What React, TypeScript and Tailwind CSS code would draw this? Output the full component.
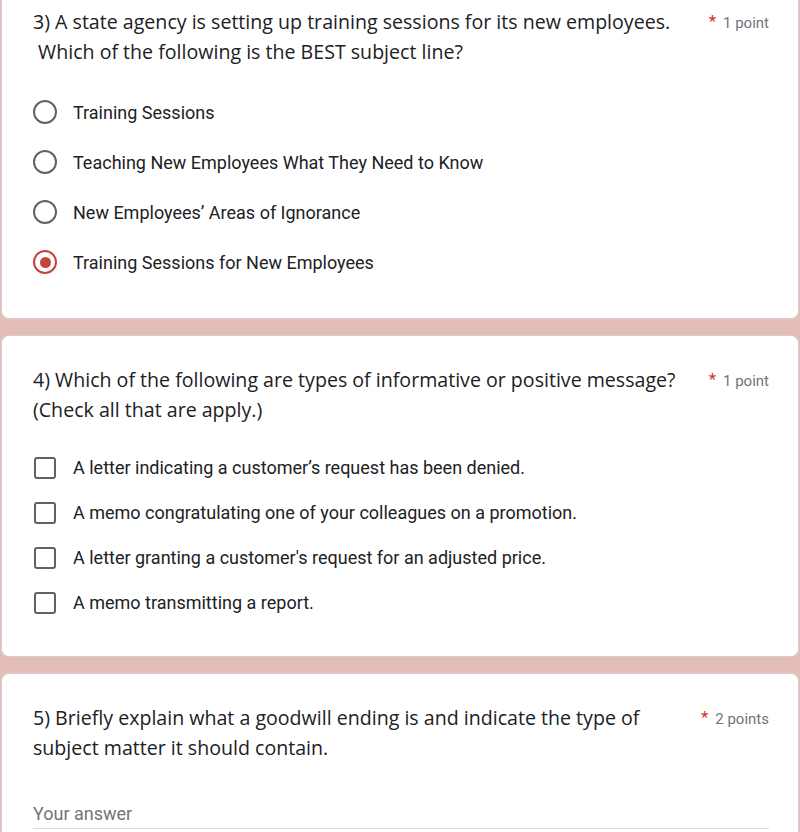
import React from "react";

const qFont = { fontFamily: '"Open Sans", Roboto, sans-serif' };

function Points({ label }: { label: string }) {
  return (
    <div className="flex shrink-0 items-start pt-[4px]" style={{ fontFamily: 'Roboto, "Liberation Sans", sans-serif' }}>
      <span className="mr-[7px] mt-[2px] text-[17px] leading-[17px] text-[#d93025]">*</span>
      <span className="text-[15px] leading-[24px] text-[#70757a]">{label}</span>
    </div>
  );
}

function Radio({ checked }: { checked?: boolean }) {
  return checked ? (
    <div className="flex h-[24px] w-[24px] items-center justify-center rounded-full border-2 border-[#c5433a]">
      <div className="h-[11px] w-[11px] rounded-full bg-[#c5433a]" />
    </div>
  ) : (
    <div className="h-[24px] w-[24px] rounded-full border-2 border-[#5f6368]" />
  );
}

function Checkbox() {
  return <div className="h-[22px] w-[22px] rounded-[3px] border-2 border-[#5f6368]" />;
}

export default function App() {
  const optText = "text-[18px] text-[#202124]";
  const optStyle = { fontFamily: 'Roboto, "Liberation Sans", sans-serif' };
  return (
    <div className="min-h-[832px] w-[800px] overflow-hidden bg-[#e5bdb8] px-[1px]">
      {/* Card 1 */}
      <div className="rounded-b-lg border border-t-0 border-[#d8cfcd] bg-white pb-[31px] pl-[31px] pr-[29px] pt-[7px]">
        <div className="flex justify-between gap-4">
          <div className="text-[19.6px] leading-[30px] text-[#202124]" style={qFont}>
            3) A state agency is setting up training sessions for its new employees.
            <br />
            {"\u00a0"}Which of the following is the BEST subject line?
          </div>
          <Points label="1 point" />
        </div>
        <div className="mt-[20px] flex flex-col">
          {[
            ["Training Sessions", false],
            ["Teaching New Employees What They Need to Know", false],
            ["New Employees’ Areas of Ignorance", false],
            ["Training Sessions for New Employees", true],
          ].map(([t, c]) => (
            <div key={t as string} className="flex h-[50px] items-center">
              <Radio checked={c as boolean} />
              <span className={`ml-[16px] ${optText}`} style={optStyle}>
                {t as string}
              </span>
            </div>
          ))}
        </div>
      </div>

      {/* Card 2 */}
      <div className="mt-[16px] rounded-lg border border-[#d8cfcd] bg-white pb-[31px] pl-[31px] pr-[29px] pt-[29px]">
        <div className="flex justify-between gap-4">
          <div className="text-[19.6px] leading-[30px] text-[#202124]" style={qFont}>
            4) Which of the following are types of informative or positive message?
            <br />
            (Check all that are apply.)
          </div>
          <Points label="1 point" />
        </div>
        <div className="mt-[20px] flex flex-col">
          {[
            "A letter indicating a customer’s request has been denied.",
            "A memo congratulating one of your colleagues on a promotion.",
            "A letter granting a customer's request for an adjusted price.",
            "A memo transmitting a report.",
          ].map((t) => (
            <div key={t} className="flex h-[45px] items-center">
              <div className="ml-[1px]">
                <Checkbox />
              </div>
              <span className={`ml-[17px] ${optText}`} style={optStyle}>
                {t}
              </span>
            </div>
          ))}
        </div>
      </div>

      {/* Card 3 */}
      <div className="mt-[16px] rounded-t-lg border border-b-0 border-[#d8cfcd] bg-white pb-[40px] pl-[31px] pr-[29px] pt-[29px]">
        <div className="flex justify-between gap-4">
          <div className="max-w-[650px] text-[19.6px] leading-[30px] text-[#202124]" style={qFont}>
            5) Briefly explain what a goodwill ending is and indicate the type of subject matter it should contain.
          </div>
          <Points label="2 points" />
        </div>
        <div className="mt-[39px] border-b border-[#dadce0] pb-[2px]">
          <span className="text-[18px] leading-[24px] text-[#70757a]" style={optStyle}>
            Your answer
          </span>
        </div>
      </div>
    </div>
  );
}
